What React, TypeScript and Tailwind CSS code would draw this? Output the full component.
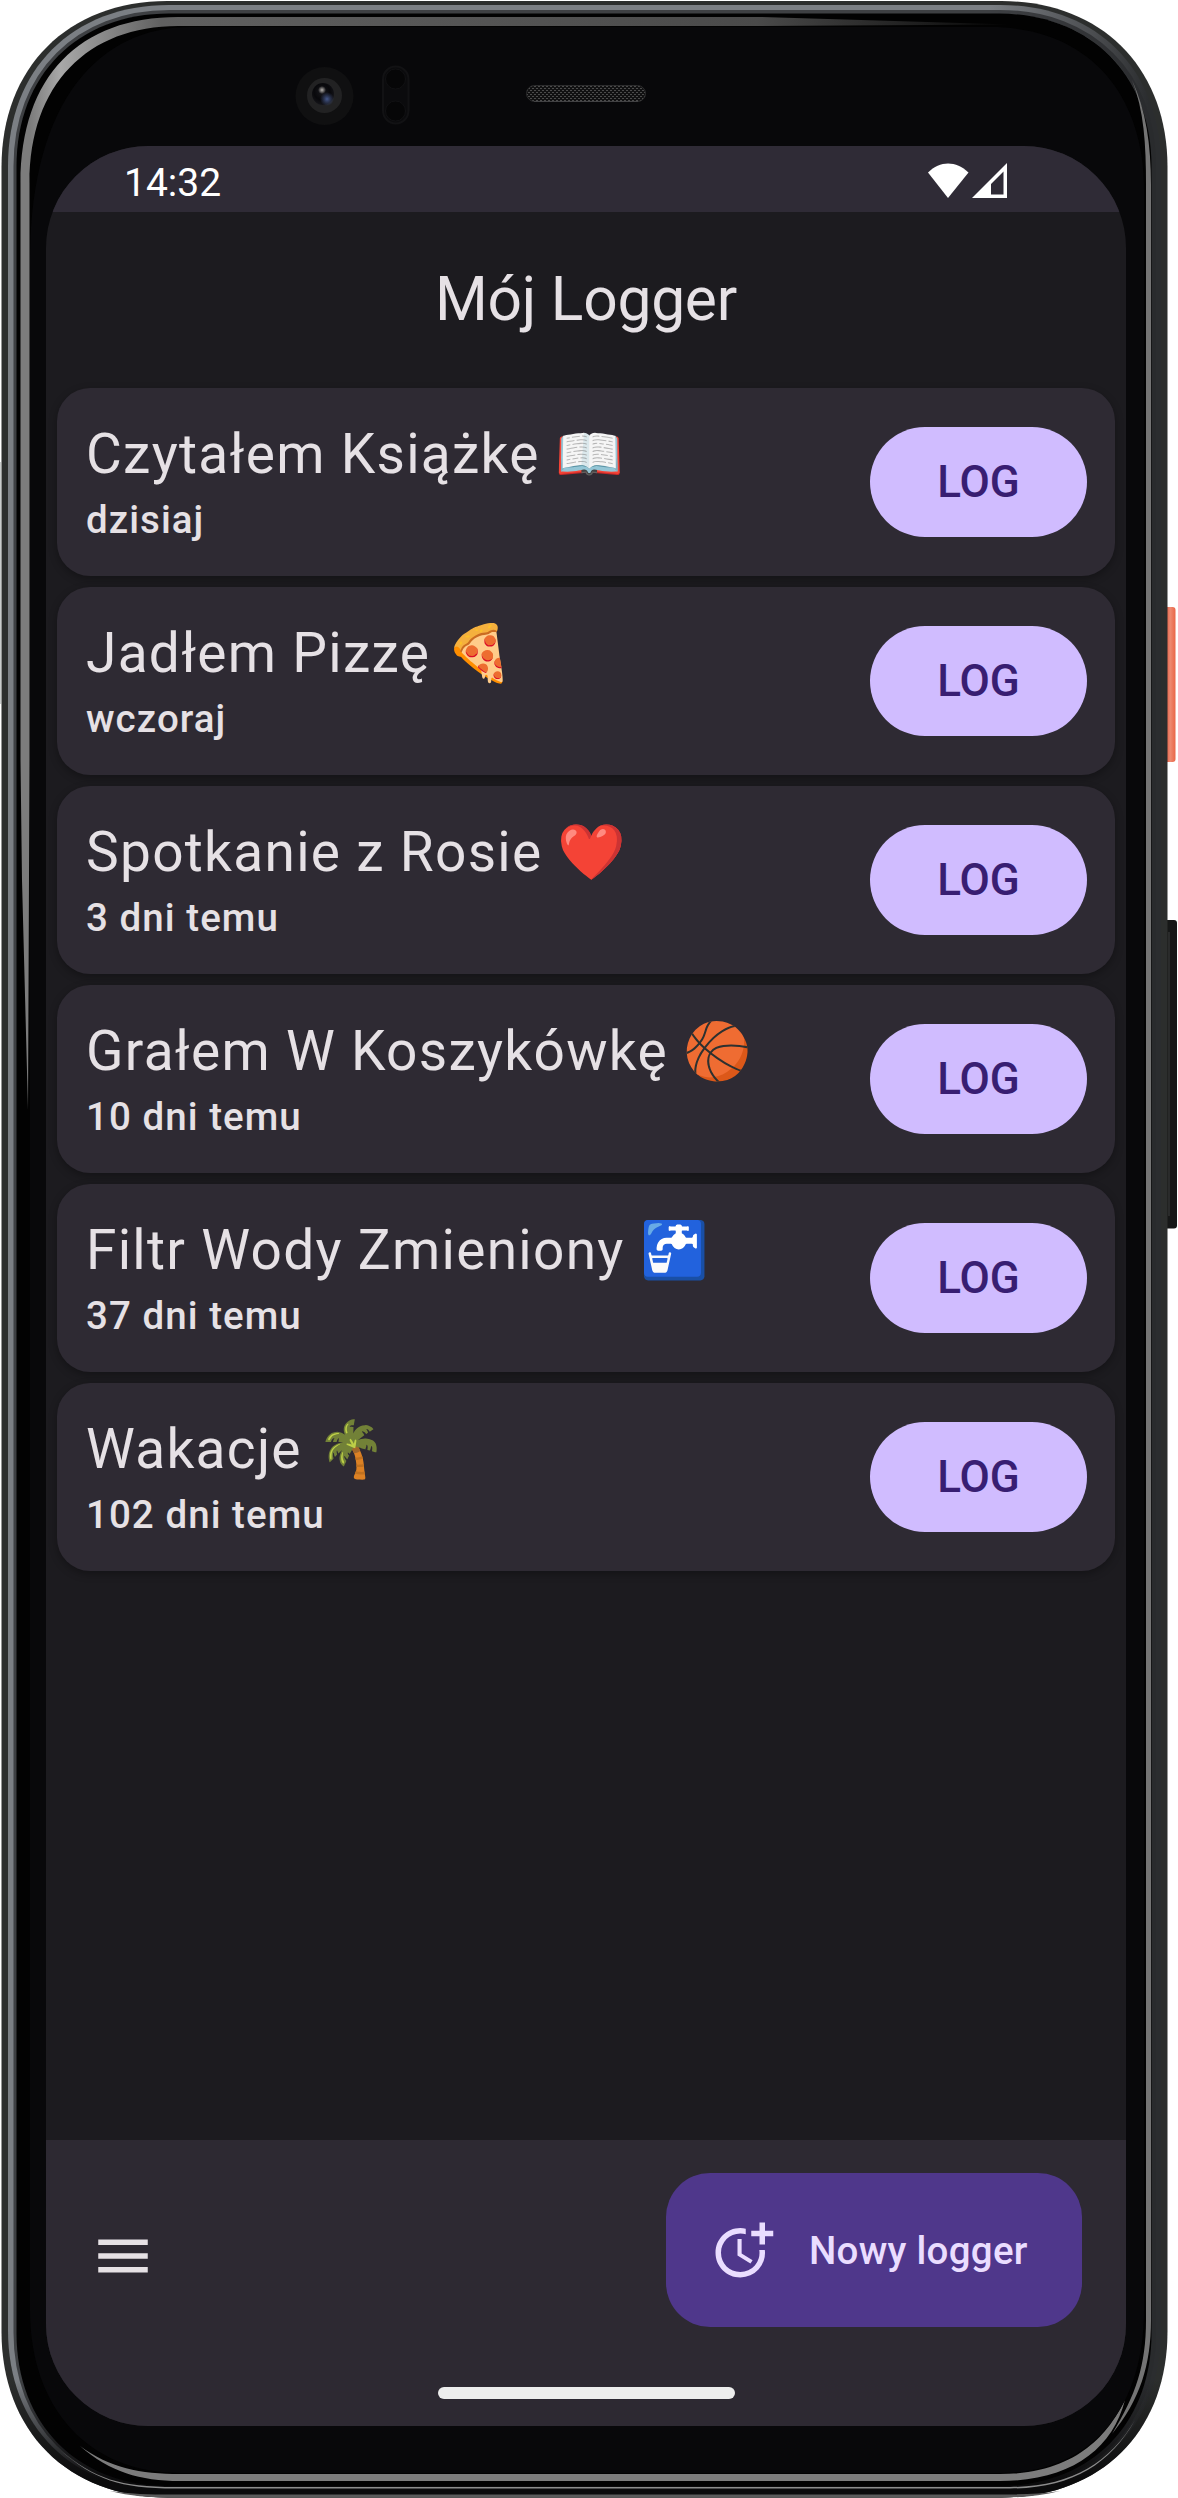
import { MdMenu, MdMoreTime } from "react-icons/md";

const entries = [
  { title: "Czytałem Książkę 📖", when: "dzisiaj" },
  { title: "Jadłem Pizzę 🍕", when: "wczoraj" },
  { title: "Spotkanie z Rosie ❤️", when: "3 dni temu" },
  { title: "Grałem W Koszykówkę 🏀", when: "10 dni temu" },
  { title: "Filtr Wody Zmieniony 🚰", when: "37 dni temu" },
  { title: "Wakacje 🌴", when: "102 dni temu" },
];

/** Rounded rectangle with softened, slightly squarish corners. */
function squircle(l: number, t: number, r: number, b: number, s: number) {
  const c = s * 0.4;
  return (
    `M${l + s} ${t}H${r - s}C${r - c} ${t} ${r} ${t + c} ${r} ${t + s}` +
    `V${b - s}C${r} ${b - c} ${r - c} ${b} ${r - s} ${b}` +
    `H${l + s}C${l + c} ${b} ${l} ${b - c} ${l} ${b - s}` +
    `V${t + s}C${l} ${t + c} ${l + c} ${t} ${l + s} ${t}Z`
  );
}

function PhoneBody() {
  return (
    <svg className="absolute inset-0" width="1178" height="2498" viewBox="0 0 1178 2498" fill="none">
      <defs>
        <linearGradient id="rim" x1="0" y1="0" x2="1178" y2="0" gradientUnits="userSpaceOnUse">
          <stop offset="0" stopColor="#7b7f84" />
          <stop offset="0.84" stopColor="#7b7f84" />
          <stop offset="0.93" stopColor="#4a4c4f" />
          <stop offset="0.975" stopColor="#2b2d2f" />
        </linearGradient>
        <linearGradient id="rimBottom" x1="0" y1="2380" x2="0" y2="2480" gradientUnits="userSpaceOnUse">
          <stop offset="0" stopColor="#0b0b0c" stopOpacity="0" />
          <stop offset="1" stopColor="#0b0b0c" />
        </linearGradient>
        <linearGradient id="gleam" x1="0" y1="0" x2="1010" y2="0" gradientUnits="userSpaceOnUse">
          <stop offset="0.03" stopColor="#7c7c7c" />
          <stop offset="0.06" stopColor="#a8a8a8" />
          <stop offset="0.16" stopColor="#606060" />
          <stop offset="0.75" stopColor="#4a4a4a" />
          <stop offset="1" stopColor="#050505" />
        </linearGradient>
        <linearGradient id="orange" x1="1167" y1="0" x2="1175" y2="0" gradientUnits="userSpaceOnUse">
          <stop offset="0" stopColor="#e8674c" />
          <stop offset="0.4" stopColor="#ee8a71" />
          <stop offset="1" stopColor="#ea6a4c" />
        </linearGradient>
        <radialGradient id="lens" cx="0.45" cy="0.4" r="0.6">
          <stop offset="0" stopColor="#17171c" />
          <stop offset="0.6" stopColor="#08080b" />
          <stop offset="1" stopColor="#15151a" />
        </radialGradient>
        <radialGradient id="glint">
          <stop offset="0" stopColor="#b5b1ad" />
          <stop offset="1" stopColor="#b5b1ad" stopOpacity="0" />
        </radialGradient>
        <radialGradient id="blue">
          <stop offset="0" stopColor="#46598c" />
          <stop offset="1" stopColor="#3d4c78" stopOpacity="0" />
        </radialGradient>
        <pattern id="mesh" width="4" height="4" patternUnits="userSpaceOnUse">
          <rect width="4" height="4" fill="#111112" />
          <rect width="2" height="1" fill="#4b4b4b" />
          <rect x="2" y="2" width="2" height="1" fill="#4b4b4b" />
        </pattern>
      </defs>

      {/* side buttons */}
      <rect x="1163" y="607" width="12.5" height="155" rx="3" fill="url(#orange)" />
      <rect x="1163" y="920" width="14" height="308.5" rx="3" fill="#161717" />
      <path d="M1169 932V1216" stroke="#2a2b2b" strokeWidth="2" />

      {/* metal frame */}
      <path d={squircle(1.5, 1, 1167.5, 2497.5, 166)} fill="#2c2e2d" />
      <path d="M0.5 462V704" stroke="#c8cbcb" />
      <path d={squircle(8, 5, 1161, 2491, 161)} fill="url(#rim)" />
      <path d={squircle(15.5, 12, 1154, 2486.5, 154)} stroke="#2a2b2e" strokeOpacity="0.75" strokeWidth="4" />
      <path d={squircle(1.5, 1, 1167.5, 2497.5, 166)} fill="url(#rimBottom)" />
      <path d="M60 2450C95 2480 120 2488.5 175 2488.5H1010C1070 2488.5 1110 2465 1135 2420C1110 2463 1070 2487 1010 2487H175C120 2487 95 2479 60 2450Z" fill="#8c8c8c" />
      <path d="M110 2491C130 2496 150 2497.5 170 2497.5H1000C1020 2497.5 1040 2496 1060 2491C1040 2494 1020 2494.5 1000 2494.500H170C150 2494.500 130 2494 110 2491Z" fill="#5b5b5b" />

      {/* glass edge */}
      <path d={squircle(16.5, 13.5, 1151.5, 2486, 153)} fill="#020202" />
      <path
        d="M20.5 760V183C20.5 76 80 17 178 17H760L1010 24.5L760 26H178C88 26 29.5 84 29.5 183V760L28 1110L22 880Z"
        fill="url(#gleam)"
      />
      <path d="M80 2446C110 2468 140 2474 180 2474H1000C1080 2474 1110 2430 1125 2400C1112 2450 1070 2481 1000 2481H180C140 2481 110 2472 80 2446Z" fill="#7c7c7c" />
      <path
        d="M1132 80C1146 110 1151 145 1151 185V2320C1151 2365 1140 2400 1112 2434C1136 2395 1146 2365 1146 2320V185C1146 145 1144 110 1132 80Z"
        fill="#747474"
      />
      <path d="M30 260C30 100 100 27 190 27H990C1085 27 1144 90 1144 190V2310C1144 2410 1090 2473 1000 2473H180C90 2473 30 2410 30 2310Z" fill="#08080a" />

      {/* front camera */}
      <circle cx="324.5" cy="96" r="29" fill="#101011" />
      <circle cx="324.5" cy="95.5" r="17.5" fill="#222223" />
      <circle cx="323" cy="94" r="11" fill="url(#lens)" />
      <circle cx="327" cy="99" r="7" fill="url(#blue)" />
      <circle cx="322" cy="90" r="4" fill="url(#glint)" />
      {/* proximity sensors */}
      <rect x="383" y="66.5" width="25.5" height="57" rx="12.7" fill="#0b0b0d" stroke="#121214" strokeWidth="2" />
      <circle cx="395.5" cy="79" r="10" fill="#060607" stroke="#111113" />
      <circle cx="395.5" cy="111" r="10" fill="#060607" stroke="#111113" />
      {/* speaker */}
      <rect x="526.5" y="85.5" width="119" height="16" rx="8" fill="url(#mesh)" stroke="#2c2c2d" />
      <path d="M534 101.5H638" stroke="#414143" />
    </svg>
  );
}

function StatusBar() {
  return (
    <div className="flex h-[66px] items-center justify-between bg-[#2f2b36] pr-[119px] pl-[78px]">
      <span className="pt-[9px] text-[39px] leading-none text-white">14:32</span>
      <div className="mt-[3px] flex gap-[3px]">
        <svg width="42" height="36" viewBox="0 0 42 36" fill="#fff">
          <path d="M1 9.5C13-2.5 29-2.5 41.5 9.5L21 35Z" />
        </svg>
        <svg width="35" height="36" viewBox="0 0 35 36" fill="#fff">
          <path fillRule="evenodd" d="M35 0V35H0ZM31.5 8.5L19 21V31.5H31.5Z" />
        </svg>
      </div>
    </div>
  );
}

function EntryCard({ title, when }: { title: string; when: string }) {
  return (
    <li className="flex h-[188px] items-center justify-between rounded-[33px] bg-[#2e2a33] pr-[28px] pl-[29px] shadow-[0_3px_8px_rgba(0,0,0,0.3)]">
      <div className="flex flex-col text-[#e6e1e5]">
        <span className="h-[66px] text-[55px] leading-[64px] tracking-[1.3px] whitespace-nowrap">{title}</span>
        <span className="h-[55px] text-[38.5px] leading-[63px] font-medium tracking-[1.05px]">{when}</span>
      </div>
      <button className="h-[110px] w-[217px] rounded-full bg-[#d0bcff] text-[44px] font-medium text-[#381e72]">
        LOG
      </button>
    </li>
  );
}

export default function App() {
  return (
    <div className="relative h-[2498px] w-[1178px] overflow-hidden bg-white font-['Roboto',sans-serif]">
      <PhoneBody />
      <div className="relative pt-[146px] pl-[46px]">
        <main className="flex h-[2280px] w-[1080px] flex-col overflow-hidden rounded-[102px] bg-[#1c1b1f]">
          <StatusBar />
          <h1 className="flex h-[176px] items-center justify-center text-[60.5px] tracking-[-0.25px] text-[#e6e1e5]">
            Mój Logger
          </h1>
          <ul className="flex flex-col gap-[11px] px-[11px]">
            {entries.map((entry) => (
              <EntryCard key={entry.when} {...entry} />
            ))}
          </ul>
          <footer className="mt-auto flex h-[286px] flex-col items-center bg-[#2d2932]">
            <div className="flex w-full items-start justify-between px-[44px] pt-[33px]">
              <button className="mt-[50px] text-[#e6e1e5]">
                <MdMenu size={66} />
              </button>
              <button className="flex h-[154px] w-[416px] items-center gap-[33px] rounded-[44px] bg-[#4f378b] pl-[44px] text-[#eaddff]">
                <MdMoreTime size={66} />
                <span className="pt-[2px] text-[38.5px] font-medium tracking-[0.275px] whitespace-nowrap">
                  Nowy logger
                </span>
              </button>
            </div>
            <div className="mt-[60px] h-[12px] w-[297px] rounded-full bg-[#ededed]" />
          </footer>
        </main>
      </div>
    </div>
  );
}
